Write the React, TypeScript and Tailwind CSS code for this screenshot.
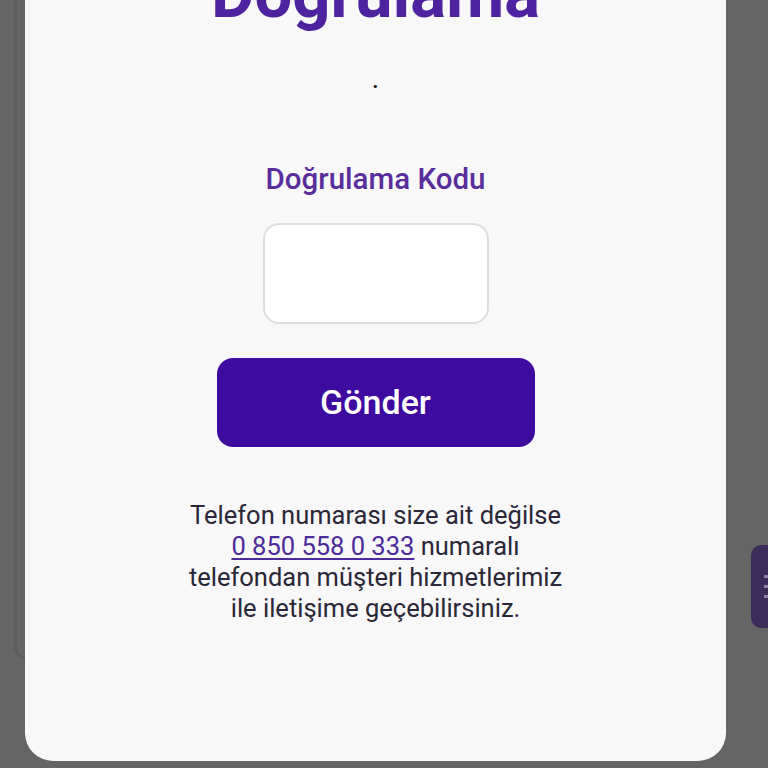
export default function App() {
  return (
    <div
      className="relative h-[768px] w-[768px] overflow-hidden bg-[#656565]"
      style={{ fontFamily: "Roboto, 'Noto Sans', sans-serif" }}
    >
      {/* dimmed page behind the overlay */}
      <div className="absolute left-[14px] top-0 h-[658px] w-[680px] rounded-bl-[10px] border-l-[3px] border-b-[2px] border-[#5d5d5d]" />
      <div className="absolute right-0 top-[545px] flex h-[83px] w-[17px] flex-col items-end justify-center gap-[7px] rounded-l-[10px] bg-[#3b2c5a]">
        <span className="h-[3px] w-[4px] bg-[#8c84a0]" />
        <span className="h-[3px] w-[4px] bg-[#8c84a0]" />
        <span className="h-[3px] w-[4px] bg-[#8c84a0]" />
      </div>

      {/* modal */}
      <div className="relative ml-[25px] flex h-[761px] w-[701px] flex-col items-center rounded-b-[28px] bg-[#f8f8f9]">
        <h1 className="mt-[-42px] text-[67px] font-bold leading-[72px] text-[#4f23a0]">
          Doğrulama
        </h1>
        <p className="mt-[40px] text-[20px] font-bold leading-[22px] text-black">.</p>

        <p className="mt-[69px] text-[29.5px] font-medium leading-[36px] text-[#5a2d9c]">
          Doğrulama Kodu
        </p>
        <input
          type="text"
          className="mt-[26px] h-[101px] w-[226px] rounded-[16px] border-2 border-[#dedede] bg-white outline-none"
        />
        <button className="mt-[34px] flex h-[89px] w-[318px] items-center justify-center rounded-[16px] bg-[#3e0a9f] text-[34px] font-medium text-white">
          Gönder
        </button>

        <p className="mt-[53px] w-[420px] text-center text-[25.5px] leading-[31px] text-[#2a2737]">
          Telefon numarası size ait değilse
          <br />
          <a href="#" className="text-[#4b2a9a] underline underline-offset-[3px]">
            0 850 558 0 333
          </a>{" "}
          numaralı
          <br />
          telefondan müşteri hizmetlerimiz
          <br />
          ile iletişime geçebilirsiniz.
        </p>
      </div>
    </div>
  );
}
